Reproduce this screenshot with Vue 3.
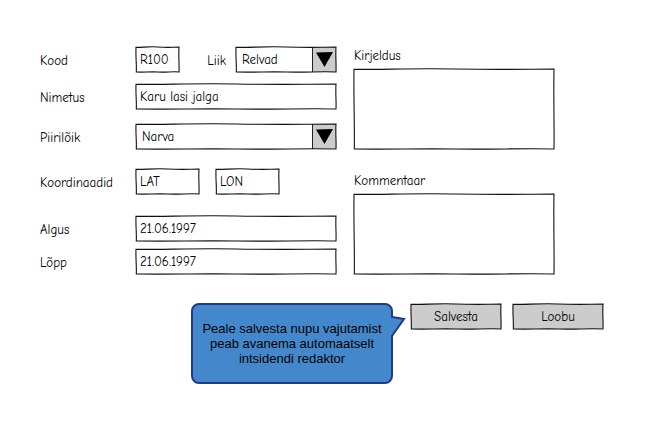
<script setup>
import { h, ref } from 'vue'

// Hand-drawn rectangle that stretches over its parent box.
const SketchFrame = ({ w, h: t }) =>
  h('svg', {
    class: 'frame',
    viewBox: `0 0 ${w} ${t}`,
    preserveAspectRatio: 'none',
    'aria-hidden': 'true'
  }, [
    h('path', {
      d: `M0 0.4 C${w * 0.15} 0.6 ${w * 0.3} -0.7 ${w * 0.5} 0 S${w * 0.8} 0.6 ${w} 0
          C${w - 0.6} ${t * 0.35} ${w + 0.4} ${t * 0.7} ${w} ${t}
          C${w * 0.85} ${t - 0.8} ${w * 0.7} ${t + 0.6} ${w * 0.5} ${t} S${w * 0.2} ${t + 0.6} 0.3 ${t}
          C0.7 ${t * 0.7} -0.4 ${t * 0.4} 0 0.4 Z`,
      fill: 'none',
      stroke: '#111',
      'stroke-width': 1.1,
      'vector-effect': 'non-scaling-stroke'
    })
  ])
SketchFrame.props = ['w', 'h']

const form = ref({
  kood: 'R100',
  liik: 'Relvad',
  nimetus: 'Karu lasi jalga',
  piiriloik: 'Narva',
  lat: 'LAT',
  lon: 'LON',
  algus: '21.06.1997',
  lopp: '21.06.1997',
  kirjeldus: '',
  kommentaar: ''
})
</script>

<template>
  <form class="page" @submit.prevent>
    <div class="fields">
      <div class="column">
        <div class="row">
          <label for="kood">Kood</label>
          <div class="controls">
            <div class="box code"><input id="kood" v-model="form.kood"><SketchFrame :w="43" :h="25" /></div>
            <label class="inline" for="liik">Liik</label>
            <div class="box kind">
              <select id="liik" v-model="form.liik"><option>Relvad</option></select>
              <span class="arrow"><svg viewBox="0 0 17 15" aria-hidden="true"><path d="M0 0.5 L17 0 L8.5 15 Z" /></svg></span>
              <SketchFrame :w="100" :h="25" />
            </div>
          </div>
        </div>
        <div class="row name">
          <label for="nimetus">Nimetus</label>
          <div class="box"><input id="nimetus" v-model="form.nimetus"><SketchFrame :w="200" :h="25" /></div>
        </div>
        <div class="row border">
          <label for="piiriloik">Piirilõik</label>
          <div class="box">
            <select id="piiriloik" v-model="form.piiriloik"><option>Narva</option></select>
            <span class="arrow"><svg viewBox="0 0 17 15" aria-hidden="true"><path d="M0 0.5 L17 0 L8.5 15 Z" /></svg></span>
            <SketchFrame :w="200" :h="25" />
          </div>
        </div>
        <div class="row coords">
          <label id="coords" for="lat">Koordinaadid</label>
          <div class="controls pair">
            <div class="box coord"><input id="lat" v-model="form.lat"><SketchFrame :w="63" :h="25" /></div>
            <div class="box coord"><input id="lon" v-model="form.lon" aria-labelledby="coords"><SketchFrame :w="63" :h="25" /></div>
          </div>
        </div>
        <div class="row start">
          <label for="algus">Algus</label>
          <div class="box"><input id="algus" v-model="form.algus"><SketchFrame :w="200" :h="25" /></div>
        </div>
        <div class="row end">
          <label for="lopp">Lõpp</label>
          <div class="box"><input id="lopp" v-model="form.lopp"><SketchFrame :w="200" :h="25" /></div>
        </div>
      </div>
      <div class="column notes">
        <div class="note">
          <label for="kirjeldus">Kirjeldus</label>
          <div class="box area"><textarea id="kirjeldus" v-model="form.kirjeldus"></textarea><SketchFrame :w="200" :h="80" /></div>
        </div>
        <div class="note">
          <label for="kommentaar">Kommentaar</label>
          <div class="box area"><textarea id="kommentaar" v-model="form.kommentaar"></textarea><SketchFrame :w="200" :h="80" /></div>
        </div>
      </div>
    </div>
    <div class="actions">
      <p class="callout">
        Peale salvesta nupu vajutamist peab avanema automaatselt intsidendi redaktor
        <svg class="tip" viewBox="0 0 16 24" aria-hidden="true">
          <path d="M0 2 L3 2 L14 4 L3 20 L0 20 Z" fill="#4488cc" />
          <path d="M2 0 V2 L14 4 L2 21 V24" fill="none" stroke="#1f3a8a" stroke-width="2" />
        </svg>
      </p>
      <button class="box" type="submit">Salvesta<SketchFrame :w="90" :h="25" /></button>
      <button class="box" type="button">Loobu<SketchFrame :w="90" :h="25" /></button>
    </div>
  </form>
</template>

<style>
body {
  background: #fff;
}
</style>

<style scoped>
.page {
  padding: 47px 60px 48px 40px;
  color: #000;
  font: 13px/18px "Comic Neue", "Comic Sans MS", Lato, sans-serif;
}
.fields {
  display: grid;
  grid-template-columns: 296fr 200fr;
  gap: 18px;
  padding-right: 49px;
}
.column {
  min-width: 0;
}
.row {
  display: grid;
  grid-template-columns: 96px minmax(0, 1fr);
  align-items: center;
}
.row label {
  padding-top: 2px;
}
.name { margin-top: 12px; }
.border { margin-top: 15px; }
.coords { margin-top: 20px; }
.start { margin-top: 22px; }
.end { margin-top: 8px; }
.controls {
  display: flex;
  align-items: center;
}
.pair {
  gap: 17px;
}
.row .inline {
  margin: 0 10px 0 auto;
}
.box {
  position: relative;
  display: flex;
  height: 25px;
}
.code { width: 43px; }
.kind { width: 100px; }
.coord { width: 63px; }
.frame {
  position: absolute;
  inset: 0;
  width: 100%;
  height: 100%;
  overflow: visible;
  pointer-events: none;
}
input,
select,
textarea {
  width: 100%;
  min-width: 0;
  margin: 0;
  padding: 0 4px;
  border: 0;
  border-radius: 0;
  background: transparent;
  color: inherit;
  font: inherit;
  appearance: none;
}
select {
  padding: 1px 6px 0;
}
textarea {
  padding: 4px;
  resize: none;
}
.arrow {
  position: absolute;
  inset: 0 0 0 auto;
  display: grid;
  place-items: center;
  width: 24px;
  border-left: 1px solid #222;
  background: #ccc;
  box-sizing: border-box;
  pointer-events: none;
}
.arrow svg {
  width: 17px;
  height: 15px;
}
.notes {
  display: flex;
  flex-direction: column;
  justify-content: space-between;
}
.note label {
  display: block;
  margin-bottom: 4px;
}
.area {
  height: 80px;
}
.actions {
  display: flex;
  justify-content: flex-end;
  align-items: flex-start;
  gap: 12px;
  margin-top: 29px;
}
.callout {
  position: relative;
  display: flex;
  align-items: center;
  box-sizing: border-box;
  width: 202px;
  min-height: 81px;
  margin: 0 6px 0 0;
  padding: 0 8px;
  border: 2px solid #1f3a8a;
  border-radius: 8px;
  background: #4488cc;
  font: 13px/15px "Liberation Sans", Arial, sans-serif;
  text-align: center;
}
.tip {
  position: absolute;
  top: 10px;
  left: 100%;
  width: 16px;
  height: 24px;
  margin-left: -1px;
}
button {
  align-items: center;
  justify-content: center;
  width: 90px;
  margin: 1px 0 0;
  padding: 0;
  border: 0;
  background: #ccc;
  color: inherit;
  font: inherit;
}
</style>
